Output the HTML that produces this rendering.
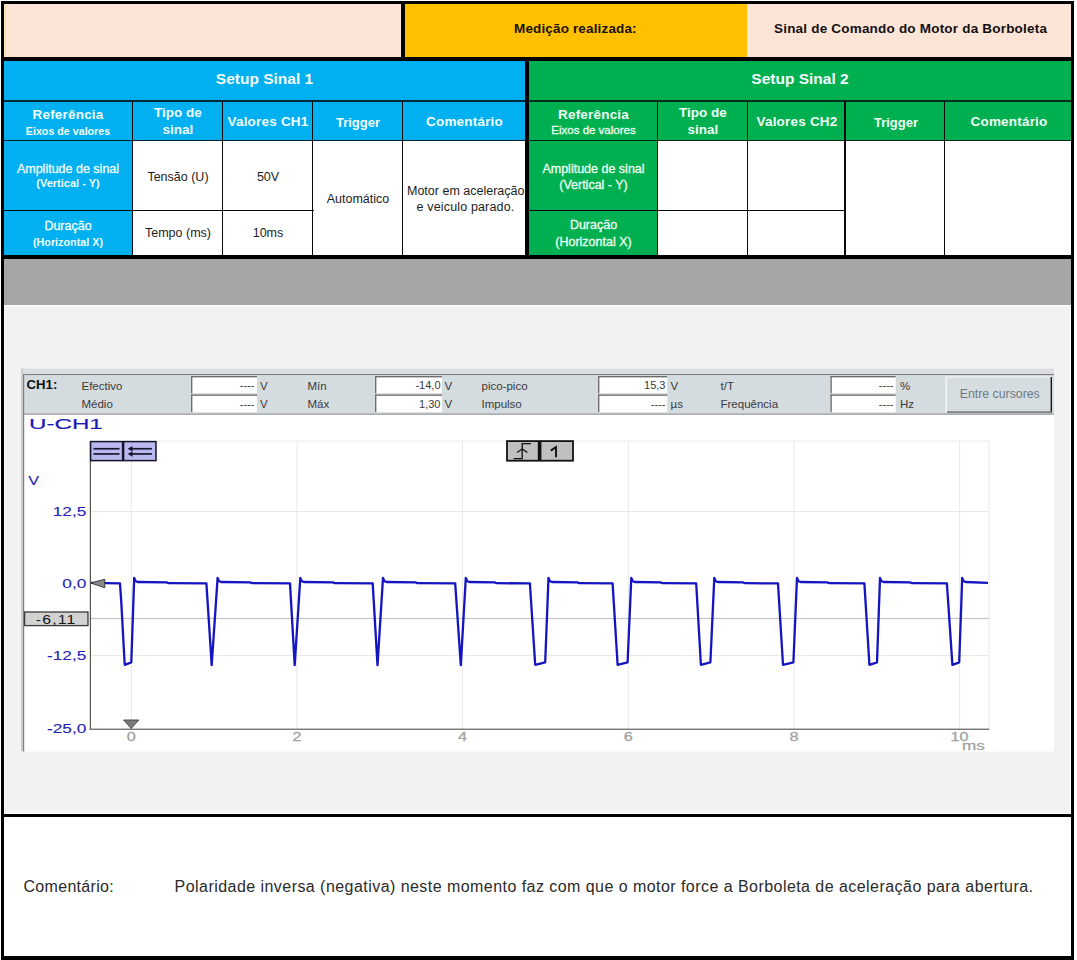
<!DOCTYPE html>
<html><head><meta charset="utf-8">
<style>
*{margin:0;padding:0;box-sizing:border-box}
html,body{width:1077px;height:960px;overflow:hidden;background:#fff;font-family:"Liberation Sans",sans-serif}
.a{position:absolute}
.k{position:absolute;background:#000}
.t{position:absolute;white-space:nowrap;line-height:1}
.c{text-align:center}
.w{color:#f4fcff}
.st{-webkit-text-stroke:0.3px currentColor}
</style></head><body>
<!-- outer frame -->
<div class="k" style="left:1px;top:1px;width:1073px;height:3px"></div>
<div class="k" style="left:1px;top:1px;width:3px;height:959px"></div>
<div class="k" style="left:1071px;top:1px;width:3px;height:959px"></div>
<div class="k" style="left:1px;top:956px;width:1073px;height:4px"></div>

<!-- top row -->
<div class="a" style="left:4px;top:4px;width:397px;height:53px;background:#fce4d6"></div>
<div class="a" style="left:4px;top:4px;width:2px;height:53px;background:#fbe0a8"></div>
<div class="k" style="left:401px;top:4px;width:4px;height:53px"></div>
<div class="a" style="left:405px;top:4px;width:342px;height:53px;background:#ffc000"></div>
<div class="a" style="left:747px;top:4px;width:324px;height:53px;background:#fce4d6"></div>
<div class="k" style="left:4px;top:57px;width:1067px;height:4px"></div>
<div class="t" id="med" style="left:514px;top:22.4px;font-size:13.5px;font-weight:700;color:#1a1208;letter-spacing:0.15px">Medição realizada:</div>
<div class="t" id="sinal" style="left:774px;top:22.4px;font-size:13.5px;font-weight:700;color:#111;letter-spacing:0.2px">Sinal de Comando do Motor da Borboleta</div>

<!-- setup row -->
<div class="a" style="left:4px;top:61px;width:521px;height:80px;background:#00b0f0"></div>
<div class="a" style="left:529px;top:61px;width:542px;height:80px;background:#00b050"></div>
<div class="k" style="left:525px;top:61px;width:4px;height:194px"></div>
<div class="t c w" style="left:4px;width:521px;top:71px;font-size:15.5px;font-weight:700">Setup Sinal 1</div>
<div class="t c w" style="left:529px;width:542px;top:71px;font-size:15.5px;font-weight:700">Setup Sinal 2</div>
<div class="a" style="left:4px;top:100.4px;width:521px;height:1.3px;background:#04283a"></div>
<div class="a" style="left:529px;top:100.4px;width:542px;height:1.3px;background:#02301a"></div>

<div class="a" style="left:4px;top:141px;width:128px;height:114px;background:#00b0f0"></div>
<div class="a" style="left:529px;top:141px;width:128px;height:114px;background:#00b050"></div>
<div class="a" style="left:4px;top:140.2px;width:521px;height:1.3px;background:#04202e"></div>
<div class="a" style="left:529px;top:140.2px;width:542px;height:1.3px;background:#02261a"></div>
<div class="a" style="left:131.5px;top:101px;width:1.2px;height:154px;background:#0a0a0a"></div>
<div class="a" style="left:222px;top:101px;width:1.2px;height:154px;background:#0a0a0a"></div>
<div class="a" style="left:312px;top:101px;width:1.2px;height:154px;background:#0a0a0a"></div>
<div class="a" style="left:402px;top:101px;width:1.2px;height:154px;background:#0a0a0a"></div>
<div class="a" style="left:657px;top:101px;width:1.2px;height:154px;background:#0a0a0a"></div>
<div class="a" style="left:746.5px;top:101px;width:1.2px;height:154px;background:#0a0a0a"></div>
<div class="a" style="left:844px;top:101px;width:1.6px;height:154px;background:#0a0a0a"></div>
<div class="a" style="left:944px;top:101px;width:1.2px;height:154px;background:#0a0a0a"></div>
<div class="a" style="left:4px;top:209.8px;width:310px;height:1.2px;background:#0a0a0a"></div>
<div class="a" style="left:529px;top:209.8px;width:316px;height:1.2px;background:#0a0a0a"></div>
<div class="k" style="left:4px;top:255px;width:1067px;height:4px"></div>
<div class="t c" style="left:4px;width:128px;top:108.4px;font-size:13.5px;font-weight:700;color:#f2fdff;letter-spacing:0.2px">Referência</div>
<div class="t c" style="left:4px;width:128px;top:125.8px;font-size:10.7px;font-weight:700;color:#f2fdff;">Eixos de valores</div>
<div class="t c" style="left:132px;width:92px;top:106.4px;font-size:13.5px;font-weight:700;color:#f2fdff;">Tipo de</div>
<div class="t c" style="left:132px;width:92px;top:122.6px;font-size:13.5px;font-weight:700;color:#f2fdff;">sinal</div>
<div class="t c" style="left:222px;width:92px;top:115.2px;font-size:13.5px;font-weight:700;color:#f2fdff;letter-spacing:0.2px">Valores CH1</div>
<div class="t c" style="left:312px;width:92px;top:115.6px;font-size:13px;font-weight:700;color:#f2fdff;">Trigger</div>
<div class="t c" style="left:402px;width:125px;top:115.2px;font-size:13.5px;font-weight:700;color:#f2fdff;letter-spacing:0.2px">Comentário</div>
<div class="t c" style="left:529px;width:129px;top:108.2px;font-size:13.5px;font-weight:700;color:#effff4;letter-spacing:0.2px">Referência</div>
<div class="t c st" style="left:529px;width:129px;top:125.3px;font-size:11.5px;font-weight:400;color:#effff4;">Eixos de valores</div>
<div class="t c" style="left:657px;width:92px;top:106.4px;font-size:13.5px;font-weight:700;color:#effff4;">Tipo de</div>
<div class="t c" style="left:657px;width:92px;top:122.6px;font-size:13.5px;font-weight:700;color:#effff4;">sinal</div>
<div class="t c" style="left:747px;width:100px;top:115.2px;font-size:13.5px;font-weight:700;color:#effff4;letter-spacing:0.2px">Valores CH2</div>
<div class="t c" style="left:845px;width:102px;top:115.6px;font-size:13px;font-weight:700;color:#effff4;">Trigger</div>
<div class="t c" style="left:945px;width:128px;top:115.2px;font-size:13.5px;font-weight:700;color:#effff4;letter-spacing:0.2px">Comentário</div>
<div class="t c st" style="left:4px;width:128px;top:163.2px;font-size:12.5px;font-weight:400;color:#f2fdff;">Amplitude de sinal</div>
<div class="t c" style="left:4px;width:128px;top:178.4px;font-size:11px;font-weight:700;color:#f2fdff;">(Vertical - Y)</div>
<div class="t c st" style="left:4px;width:128px;top:220.2px;font-size:12.5px;font-weight:400;color:#f2fdff;">Duração</div>
<div class="t c" style="left:4px;width:128px;top:236.7px;font-size:10.8px;font-weight:700;color:#f2fdff;">(Horizontal X)</div>
<div class="t c" style="left:132px;width:92px;top:170.5px;font-size:12.5px;font-weight:400;color:#1c1c1c;">Tensão (U)</div>
<div class="t c" style="left:222px;width:92px;top:170.5px;font-size:12.5px;font-weight:400;color:#1c1c1c;">50V</div>
<div class="t c" style="left:132px;width:92px;top:227.2px;font-size:12.5px;font-weight:400;color:#1c1c1c;">Tempo (ms)</div>
<div class="t c" style="left:222px;width:92px;top:227.2px;font-size:12.5px;font-weight:400;color:#1c1c1c;">10ms</div>
<div class="t c" style="left:312px;width:92px;top:193.0px;font-size:12.5px;font-weight:400;color:#1c1c1c;">Automático</div>
<div class="t" style="left:407px;top:185.1px;font-size:12.5px;font-weight:400;color:#1c1c1c;width:118px;overflow:hidden">Motor em aceleração</div>
<div class="t c" style="left:403px;width:125px;top:201.1px;font-size:12.5px;font-weight:400;color:#1c1c1c;letter-spacing:0.15px;">e veiculo parado.</div>
<div class="t c st" style="left:529px;width:129px;top:162.9px;font-size:12.5px;font-weight:400;color:#effff4;">Amplitude de sinal</div>
<div class="t c st" style="left:529px;width:129px;top:178.5px;font-size:12.5px;font-weight:400;color:#effff4;">(Vertical - Y)</div>
<div class="t c st" style="left:529px;width:129px;top:219.3px;font-size:12.5px;font-weight:400;color:#effff4;">Duração</div>
<div class="t c st" style="left:529px;width:129px;top:235.7px;font-size:12.5px;font-weight:400;color:#effff4;">(Horizontal X)</div>
<!--SCOPE-->
<svg class="a" style="left:0;top:0" width="1077" height="960" font-family="Liberation Sans, sans-serif">
<rect x="4" y="259" width="1067" height="46" fill="#a6a6a6"/>
<rect x="4" y="305" width="1067" height="509" fill="#ffffff"/>
<rect x="5" y="306.3" width="1065" height="506.5" fill="#f2f2f2"/>
<rect x="4" y="814" width="1067" height="3" fill="#000"/>
<rect x="21" y="368.5" width="1033" height="383" fill="#ffffff"/>
<rect x="21" y="368.5" width="1033" height="6" fill="#dadee1"/>
<rect x="21" y="368.5" width="2.2" height="383" fill="#c9cbcd"/>
<rect x="23" y="374" width="1031" height="1.4" fill="#7c7f82"/>
<rect x="23" y="375.4" width="1031" height="38.2" fill="#d5dce0"/>
<rect x="23" y="413.4" width="1031" height="1.4" fill="#9a9da0"/>
<rect x="23" y="374" width="1.2" height="377.5" fill="#7c7f82"/>
<rect x="191" y="376" width="66" height="17.19999999999999" fill="#fff"/>
<rect x="191" y="376" width="66" height="1.4" fill="#6e6e6e"/>
<rect x="191" y="376" width="1.4" height="17.19999999999999" fill="#6e6e6e"/>
<rect x="191" y="394.4" width="66" height="17.80000000000001" fill="#fff"/>
<rect x="191" y="394.4" width="66" height="1.4" fill="#6e6e6e"/>
<rect x="191" y="394.4" width="1.4" height="17.80000000000001" fill="#6e6e6e"/>
<rect x="375" y="376" width="67" height="17.19999999999999" fill="#fff"/>
<rect x="375" y="376" width="67" height="1.4" fill="#6e6e6e"/>
<rect x="375" y="376" width="1.4" height="17.19999999999999" fill="#6e6e6e"/>
<rect x="375" y="394.4" width="67" height="17.80000000000001" fill="#fff"/>
<rect x="375" y="394.4" width="67" height="1.4" fill="#6e6e6e"/>
<rect x="375" y="394.4" width="1.4" height="17.80000000000001" fill="#6e6e6e"/>
<rect x="598" y="376" width="69.20000000000005" height="17.19999999999999" fill="#fff"/>
<rect x="598" y="376" width="69.20000000000005" height="1.4" fill="#6e6e6e"/>
<rect x="598" y="376" width="1.4" height="17.19999999999999" fill="#6e6e6e"/>
<rect x="598" y="394.4" width="69.20000000000005" height="17.80000000000001" fill="#fff"/>
<rect x="598" y="394.4" width="69.20000000000005" height="1.4" fill="#6e6e6e"/>
<rect x="598" y="394.4" width="1.4" height="17.80000000000001" fill="#6e6e6e"/>
<rect x="830.4" y="376" width="65.30000000000007" height="17.19999999999999" fill="#fff"/>
<rect x="830.4" y="376" width="65.30000000000007" height="1.4" fill="#6e6e6e"/>
<rect x="830.4" y="376" width="1.4" height="17.19999999999999" fill="#6e6e6e"/>
<rect x="830.4" y="394.4" width="65.30000000000007" height="17.80000000000001" fill="#fff"/>
<rect x="830.4" y="394.4" width="65.30000000000007" height="1.4" fill="#6e6e6e"/>
<rect x="830.4" y="394.4" width="1.4" height="17.80000000000001" fill="#6e6e6e"/>
<text x="26.5" y="389.3" font-size="13.2" fill="#101010" text-anchor="start" font-weight="700" >CH1:</text>
<text x="81.5" y="390.1" font-size="11.5" fill="#3a3a3a" text-anchor="start" font-weight="400" >Efectivo</text>
<text x="81.5" y="408" font-size="11.5" fill="#3a3a3a" text-anchor="start" font-weight="400" >Médio</text>
<text x="254.5" y="388.5" font-size="11" fill="#3a3a3a" text-anchor="end" font-weight="400" >----</text>
<text x="254.5" y="407.8" font-size="11" fill="#3a3a3a" text-anchor="end" font-weight="400" >----</text>
<text x="260" y="390" font-size="11.5" fill="#3a3a3a" text-anchor="start" font-weight="400" >V</text>
<text x="260" y="408" font-size="11.5" fill="#3a3a3a" text-anchor="start" font-weight="400" >V</text>
<text x="307.5" y="390.1" font-size="11.5" fill="#3a3a3a" text-anchor="start" font-weight="400" >Mín</text>
<text x="307.5" y="408" font-size="11.5" fill="#3a3a3a" text-anchor="start" font-weight="400" >Máx</text>
<text x="440.5" y="388.5" font-size="11" fill="#3a3a3a" text-anchor="end" font-weight="400" >-14,0</text>
<text x="440.5" y="407.8" font-size="11" fill="#3a3a3a" text-anchor="end" font-weight="400" >1,30</text>
<text x="444.5" y="390" font-size="11.5" fill="#3a3a3a" text-anchor="start" font-weight="400" >V</text>
<text x="444.5" y="408" font-size="11.5" fill="#3a3a3a" text-anchor="start" font-weight="400" >V</text>
<text x="481.5" y="390.1" font-size="11.5" fill="#3a3a3a" text-anchor="start" font-weight="400" >pico-pico</text>
<text x="481.5" y="408" font-size="11.5" fill="#3a3a3a" text-anchor="start" font-weight="400" >Impulso</text>
<text x="665.5" y="388.5" font-size="11" fill="#3a3a3a" text-anchor="end" font-weight="400" >15,3</text>
<text x="665.5" y="407.8" font-size="11" fill="#3a3a3a" text-anchor="end" font-weight="400" >----</text>
<text x="670.5" y="390" font-size="11.5" fill="#3a3a3a" text-anchor="start" font-weight="400" >V</text>
<text x="670.5" y="408" font-size="11.5" fill="#3a3a3a" text-anchor="start" font-weight="400" >µs</text>
<text x="720.5" y="390.1" font-size="11.5" fill="#3a3a3a" text-anchor="start" font-weight="400" >t/T</text>
<text x="720.5" y="408" font-size="11.5" fill="#3a3a3a" text-anchor="start" font-weight="400" >Frequência</text>
<text x="893.5" y="388.5" font-size="11" fill="#3a3a3a" text-anchor="end" font-weight="400" >----</text>
<text x="893.5" y="407.8" font-size="11" fill="#3a3a3a" text-anchor="end" font-weight="400" >----</text>
<text x="900" y="390" font-size="11.5" fill="#3a3a3a" text-anchor="start" font-weight="400" >%</text>
<text x="900" y="408" font-size="11.5" fill="#3a3a3a" text-anchor="start" font-weight="400" >Hz</text>
<rect x="945.5" y="376.4" width="106.5" height="36" fill="#f4f6f7"/>
<rect x="947" y="377.6" width="104.5" height="34.4" fill="#d6dde1"/>
<rect x="1050.6" y="377" width="1.4" height="35.6" fill="#1a1a1a"/>
<rect x="947" y="411.4" width="105" height="1.4" fill="#6a6d70"/>
<text x="999.8" y="398.3" font-size="12.3" fill="#6c7a82" text-anchor="middle" font-weight="400" >Entre cursores</text>
<text transform="translate(29 429.4) scale(1.57 1)" font-size="15.4" fill="#1e1eb4" stroke="#1e1eb4" stroke-width="0.2" text-anchor="start" font-weight="400" >U-CH1</text>
<rect x="130.8" y="441" width="1" height="288" fill="#e8e8e8"/>
<rect x="296.5" y="441" width="1" height="288" fill="#e8e8e8"/>
<rect x="462.1" y="441" width="1" height="288" fill="#e8e8e8"/>
<rect x="627.8" y="441" width="1" height="288" fill="#e8e8e8"/>
<rect x="793.4" y="441" width="1" height="288" fill="#e8e8e8"/>
<rect x="959.1" y="441" width="1" height="288" fill="#e8e8e8"/>
<rect x="988.5" y="441" width="1" height="288" fill="#e8e8e8"/>
<rect x="90.5" y="440.6" width="898.5" height="1" fill="#e8e8e8"/>
<rect x="90.5" y="511.0" width="898.5" height="1" fill="#e8e8e8"/>
<rect x="90.5" y="655.0" width="898.5" height="1" fill="#e8e8e8"/>
<rect x="90.5" y="617.9" width="898.5" height="1.2" fill="#c4c4c4"/>
<rect x="89.8" y="441" width="1.2" height="289" fill="#555"/>
<rect x="89.8" y="728.6" width="899.5" height="1.3" fill="#6a6a6a"/>
<text transform="translate(28.3 485) scale(1.25 1)" font-size="13" fill="#2424b4" stroke="#2424b4" stroke-width="0.1" text-anchor="start" font-weight="400" >V</text>
<text x="86.3" y="516.3" font-size="13.6" fill="#2424b4" stroke="#2424b4" stroke-width="0.1" text-anchor="end" transform="translate(86.3 516.3) scale(1.27 1) translate(-86.3 -516.3)">12,5</text>
<text x="86.3" y="588.1" font-size="13.6" fill="#2424b4" stroke="#2424b4" stroke-width="0.1" text-anchor="end" transform="translate(86.3 588.1) scale(1.27 1) translate(-86.3 -588.1)">0,0</text>
<text x="86.3" y="659.9" font-size="13.6" fill="#2424b4" stroke="#2424b4" stroke-width="0.1" text-anchor="end" transform="translate(86.3 659.9) scale(1.27 1) translate(-86.3 -659.9)">-12,5</text>
<text x="86.3" y="732.6" font-size="13.6" fill="#2424b4" stroke="#2424b4" stroke-width="0.1" text-anchor="end" transform="translate(86.3 732.6) scale(1.27 1) translate(-86.3 -732.6)">-25,0</text>
<text transform="translate(131.3 741) scale(1.32 1)" font-size="12.3" stroke="#a2a2a2" stroke-width="0.3" fill="#a2a2a2" text-anchor="middle">0</text>
<text transform="translate(297.0 741) scale(1.32 1)" font-size="12.3" stroke="#a2a2a2" stroke-width="0.3" fill="#a2a2a2" text-anchor="middle">2</text>
<text transform="translate(462.6 741) scale(1.32 1)" font-size="12.3" stroke="#a2a2a2" stroke-width="0.3" fill="#a2a2a2" text-anchor="middle">4</text>
<text transform="translate(628.3 741) scale(1.32 1)" font-size="12.3" stroke="#a2a2a2" stroke-width="0.3" fill="#a2a2a2" text-anchor="middle">6</text>
<text transform="translate(793.9 741) scale(1.32 1)" font-size="12.3" stroke="#a2a2a2" stroke-width="0.3" fill="#a2a2a2" text-anchor="middle">8</text>
<text transform="translate(959.6 741) scale(1.32 1)" font-size="12.3" stroke="#a2a2a2" stroke-width="0.3" fill="#a2a2a2" text-anchor="middle">10</text>
<text transform="translate(962 749.8) scale(1.3 1)" font-size="13.2" fill="#a2a2a2" stroke="#a2a2a2" stroke-width="0.25">ms</text>
<rect x="24.6" y="612" width="63.4" height="13.6" fill="#d2d2d2" stroke="#3a3a3a" stroke-width="1.3"/>
<text transform="translate(35.8 623.7) scale(1.3 1)" font-size="12.2" fill="#151515" letter-spacing="0.9">-6,11</text>
<path d="M123.6 720 L138.8 720 L131.2 728.6 Z" fill="#7a7a7a" stroke="#444" stroke-width="0.9"/>
<rect x="90.6" y="441.6" width="32.0" height="19" fill="#b9b9f0" stroke="#14142a" stroke-width="1.5"/>
<rect x="123.6" y="441.6" width="32.400000000000006" height="19" fill="#b9b9f0" stroke="#14142a" stroke-width="1.5"/>
<rect x="93.5" y="447.9" width="26" height="1.7" fill="#181830"/><rect x="93.5" y="453.1" width="26" height="1.7" fill="#181830"/>
<rect x="129.5" y="447.9" width="22.4" height="1.7" fill="#181830"/><rect x="129.5" y="453.1" width="22.4" height="1.7" fill="#181830"/>
<path d="M127.6 448.75 L132.5 446 L132.5 451.5 Z M127.6 453.95 L132.5 451.2 L132.5 456.7 Z" fill="#181830"/>
<rect x="507" y="441.1" width="66" height="19.6" fill="#c0c0c0" stroke="#111" stroke-width="1.8"/>
<rect x="537.8" y="441" width="3.6" height="20" fill="#111"/>
<path d="M513.8 458.6 H522.2 V443.6 H530.9" fill="none" stroke="#111" stroke-width="1.3"/>
<path d="M517 452.6 L522.2 449 L527.4 452.6" fill="none" stroke="#111" stroke-width="1.2"/>
<path d="M556 457.3 V447 L550.8 450.6" fill="none" stroke="#111" stroke-width="1.9" stroke-linejoin="miter"/>
<path d="M91 582.3 L120.0 582.8 L121.2 600 L124.7 664.2 L131.3 661.7 L134.2 577.3 L135.7 580.6 L137.7 581.4 L166.7 581.8 L168.7 582.6 L206.4 582.8 L211.7 664.5 L217.6 577.3 L219.1 580.6 L221.1 581.4 L250.2 581.8 L252.2 582.6 L290.0 582.8 L294.7 664.5 L300.3 577.3 L301.8 580.6 L303.8 581.4 L332.9 581.8 L334.9 582.6 L372.7 582.8 L377.5 664.5 L383.0 577.3 L384.5 580.6 L386.5 581.4 L415.5 581.8 L417.5 582.6 L455.2 582.8 L460.8 664.5 L465.8 577.3 L467.3 580.6 L469.3 581.4 L494.6 581.8 L496.6 582.6 L529.9 582.8 L535.2 664.2 L545.2 661.7 L548.5 577.3 L550.0 580.6 L552.0 581.4 L577.3 581.8 L579.3 582.6 L612.6 582.8 L617.6 664.2 L627.6 661.7 L631.3 577.3 L632.8 580.6 L634.8 581.4 L660.5 581.8 L662.5 582.6 L696.2 582.8 L700.9 664.2 L710.4 661.7 L714.3 577.3 L715.8 580.6 L717.8 581.4 L743.0 581.8 L745.0 582.6 L778.0 582.8 L783.0 664.2 L793.4 661.7 L797.0 577.3 L798.5 580.6 L800.5 581.4 L827.3 581.8 L829.3 582.6 L864.4 582.8 L869.4 664.2 L877.0 661.7 L880.0 577.3 L881.5 580.6 L883.5 581.4 L910.1 581.8 L912.1 582.6 L946.9 582.8 L952.4 664.2 L959.2 661.7 L962.2 577.3 L963.7 580.6 L965.7 581.4 L988 582.2" fill="none" stroke="#1414c0" stroke-width="2.3" stroke-linejoin="round" transform="translate(0 0.6)"/>
<path d="M90.8 583 L104.8 579.2 L104.8 587.8 Z" fill="#8a8a8a" stroke="#333" stroke-width="0.9"/>
</svg>
<div class="t" style="left:23.5px;top:879.4px;font-size:16px;color:#2a2a2a;letter-spacing:0.3px">Comentário:</div>
<div class="t" style="left:174.6px;top:879.4px;font-size:16px;color:#2a2a2a;letter-spacing:0.45px">Polaridade inversa (negativa) neste momento faz com que o motor force a Borboleta de aceleração para abertura.</div>
<!--/SCOPE-->
</body></html>
